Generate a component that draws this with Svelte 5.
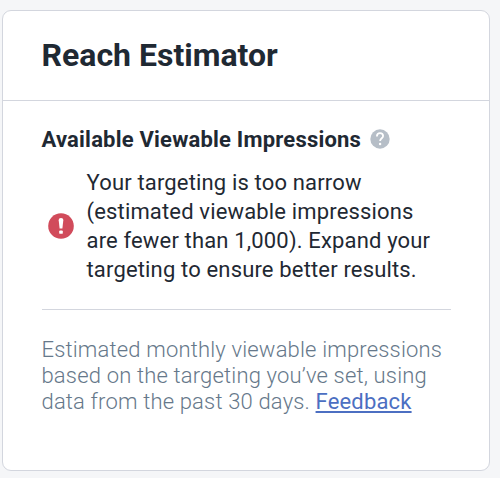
<script lang="ts">
    const message = [
        'Your targeting is too narrow',
        '(estimated viewable impressions',
        'are fewer than 1,000). Expand your',
        'targeting to ensure better results.'
    ];
</script>

<div class="card">
    <header>
        <h1>Reach Estimator</h1>
    </header>

    <div class="body">
        <div class="label">
            <h2>Available Viewable Impressions</h2>
            <svg class="help" viewBox="0 0 20 20" aria-label="Help">
                <circle cx="10" cy="10" r="9.7" fill="#b6bec7" />
                <path d="M6.9 7.4C6.9 5.3 8.2 4.1 10 4.1s3.1 1.1 3.1 2.9c0 2.2-3 2.4-3 5.1" fill="none" stroke="#fff" stroke-width="1.8" />
                <circle cx="10.1" cy="15" r="1.2" fill="#fff" />
            </svg>
        </div>

        <div class="alert">
            <svg class="error" viewBox="0 0 26 26" aria-hidden="true">
                <circle cx="13" cy="13" r="12.8" fill="#d14b5b" />
                <path d="M10.7 7.2c0-1.6.8-2.3 2.3-2.3s2.3.7 2.3 2.3l-.9 8.4h-2.8z" fill="#fff" />
                <rect x="11.2" y="17.4" width="3.6" height="3.4" rx="0.9" fill="#fff" />
            </svg>
            <p>
                {#each message as line}
                    <span>{line}</span>
                {/each}
            </p>
        </div>

        <p class="note">
            Estimated monthly viewable impressions<br />
            based on the targeting you’ve set, using<br />
            data from the past 30 days. <a href="#feedback">Feedback</a>
        </p>
    </div>
</div>

<style>
    :global(body) {
        background: #f5f6f8;
        font-family: Roboto, sans-serif;
    }

    .card {
        box-sizing: border-box;
        width: 488px;
        height: 461px;
        margin: 10px 0 0 2px;
        background: #fff;
        border: 1px solid #d3d6de;
        border-radius: 9px;
    }

    header {
        box-sizing: border-box;
        height: 90px;
        padding: 0 0 2px 38.5px;
        display: flex;
        align-items: center;
        border-bottom: 1px solid #d3d6de;
    }

    h1, h2, p {
        margin: 0;
        white-space: nowrap;
    }

    h1 {
        font-size: 32px;
        font-weight: 700;
        color: #1f2933;
    }

    .body {
        padding: 23px 38px 0 39px;
    }

    .label {
        display: flex;
        align-items: center;
        gap: 9px;
        height: 30px;
        margin-left: -0.5px;
    }

    h2 {
        font-size: 22px;
        font-weight: 700;
        letter-spacing: 0.2px;
        color: #1f2933;
    }

    .help {
        width: 20px;
        height: 20px;
    }

    .alert {
        display: flex;
        align-items: center;
        gap: 12.5px;
        padding: 14px 0 25px 6px;
        border-bottom: 1px solid #d3d6de;
    }

    .error {
        width: 26px;
        height: 26px;
    }

    .alert p {
        font-size: 22px;
        line-height: 29px;
        letter-spacing: 0.16px;
        color: #1f2933;
    }

    .alert span {
        display: block;
    }

    .note {
        margin-left: -0.5px;
        padding-top: 27px;
        font-size: 22px;
        font-weight: 300;
        line-height: 26px;
        letter-spacing: 0.17px;
        color: #66788a;
    }

    a {
        font-weight: 400;
        color: #4c6fc2;
        text-decoration-thickness: 2px;
        text-underline-offset: 2px;
    }
</style>
